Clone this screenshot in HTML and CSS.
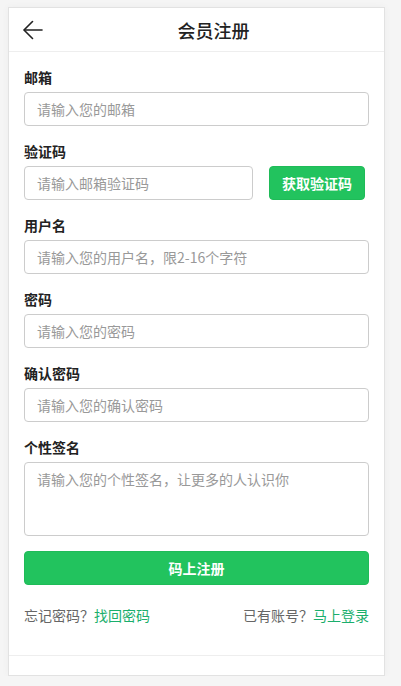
FILE: index.html
```html
<!DOCTYPE html>
<html lang="zh">
<head>
<meta charset="utf-8">
<title>会员注册</title>
<link rel="stylesheet" href="styles.css">
</head>
<body>
<div class="card">
  <header class="header">
    <a class="back" href="#" aria-label="返回">
      <svg width="20" height="20" viewBox="0 0 20 20" fill="none" stroke="#222" stroke-width="1.6" stroke-linecap="round" stroke-linejoin="round">
        <path d="M19 10H1.5"/>
        <path d="M9.5 1.5L1 10l8.5 8.5"/>
      </svg>
    </a>
    <h1 class="title">会员注册</h1>
  </header>
  <form class="form">
    <div class="field">
      <label class="label">邮箱</label>
      <input class="input" type="text" placeholder="请输入您的邮箱">
    </div>
    <div class="field">
      <label class="label">验证码</label>
      <div class="code-row">
        <input class="input code-input" type="text" placeholder="请输入邮箱验证码">
        <button class="code-btn" type="button">获取验证码</button>
      </div>
    </div>
    <div class="field">
      <label class="label">用户名</label>
      <input class="input" type="text" placeholder="请输入您的用户名，限2-16个字符">
    </div>
    <div class="field">
      <label class="label">密码</label>
      <input class="input" type="password" placeholder="请输入您的密码">
    </div>
    <div class="field">
      <label class="label">确认密码</label>
      <input class="input" type="password" placeholder="请输入您的确认密码">
    </div>
    <div class="field">
      <label class="label">个性签名</label>
      <textarea class="input textarea" placeholder="请输入您的个性签名，让更多的人认识你"></textarea>
    </div>
    <button class="submit" type="button">码上注册</button>
    <div class="links">
      <span>忘记密码？<a href="#">找回密码</a></span>
      <span>已有账号？<a href="#">马上登录</a></span>
    </div>
  </form>
  <footer class="footer"></footer>
</div>
</body>
</html>
```
FILE: styles.css
```css
* { box-sizing: border-box; }
html, body { margin: 0; padding: 0; }
body {
  background: #f5f5f5;
  font-family: "Noto Sans CJK SC", "Noto Sans", sans-serif;
  color: #333;
  padding: 7px 0 0 8px;
}
.card {
  width: 377px;
  background: #fff;
  border: 1px solid #e2e2e2;
  box-shadow: 0 0 8px rgba(0,0,0,0.04);
}
.header {
  height: 44px;
  border-bottom: 1px solid #eee;
  display: flex;
  align-items: center;
  padding-left: 14px;
}
.back {
  display: flex;
  width: 20px;
  flex: none;
}
.title {
  flex: 1;
  margin: 0;
  text-align: center;
  font-size: 18px;
  font-weight: 500;
  color: #222;
  line-height: 1;
}
.form {
  padding: 15px 15px 30px;
  display: flex;
  flex-direction: column;
}
.field {
  display: flex;
  flex-direction: column;
  margin-bottom: 15px;
}
.label {
  font-size: 14px;
  font-weight: 700;
  color: #222;
  line-height: 20px;
  margin-bottom: 5px;
}
.input {
  height: 34px;
  width: 100%;
  border: 1px solid #ccc;
  border-radius: 4px;
  padding: 0 12px;
  font-family: inherit;
  font-size: 14px;
  color: #333;
  outline: none;
  background: #fff;
}
.input::placeholder { color: #999; }
.code-row {
  display: flex;
  gap: 16px;
  align-items: center;
}
.code-input { width: 229px; flex: none; }
.code-btn {
  width: 96px;
  height: 34px;
  border: 1px solid #1fbb58;
  border-radius: 4px;
  background: #22c35e;
  color: #fff;
  font-family: inherit;
  font-size: 14px;
  font-weight: 700;
  padding: 0;
}
.textarea {
  height: 74px;
  padding: 6px 12px;
  line-height: 20px;
  resize: none;
}
.submit {
  height: 34px;
  width: 100%;
  border: 1px solid #1fbb58;
  border-radius: 4px;
  background: #22c35e;
  color: #fff;
  font-family: inherit;
  font-size: 14px;
  font-weight: 700;
  padding: 0;
}
.links {
  margin-top: 20px;
  display: flex;
  justify-content: space-between;
  font-size: 14px;
  line-height: 20px;
  color: #666;
}
.links a {
  color: #1aae6c;
  text-decoration: none;
}
.footer {
  height: 20px;
  border-top: 1px solid #eee;
}
```
